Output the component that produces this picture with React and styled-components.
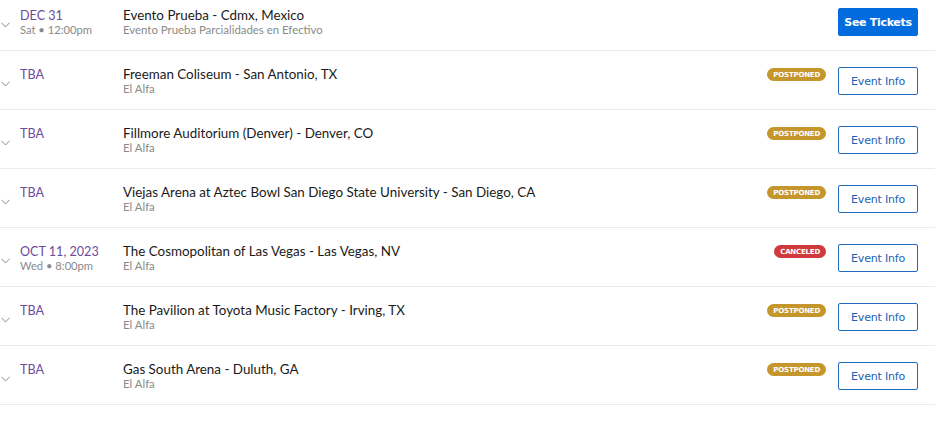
import styled, {createGlobalStyle} from "styled-components";

const GlobalStyle = createGlobalStyle`
  body {
    margin: 0;
    background: #fff;
    font-family: Lato, "Noto Sans", sans-serif;
    overflow: hidden;
  }
`

const events = [
    {date: 'DEC 31', time: 'Sat • 12:00pm', title: 'Evento Prueba - Cdmx, Mexico', sub: 'Evento Prueba Parcialidades en Efectivo', cta: 'tickets'},
    {date: 'TBA', title: 'Freeman Coliseum - San Antonio, TX', sub: 'El Alfa', status: 'postponed'},
    {date: 'TBA', title: 'Fillmore Auditorium (Denver) - Denver, CO', sub: 'El Alfa', status: 'postponed'},
    {date: 'TBA', title: 'Viejas Arena at Aztec Bowl San Diego State University - San Diego, CA', sub: 'El Alfa', status: 'postponed'},
    {date: 'OCT 11, 2023', time: 'Wed • 8:00pm', title: 'The Cosmopolitan of Las Vegas - Las Vegas, NV', sub: 'El Alfa', status: 'canceled'},
    {date: 'TBA', title: 'The Pavilion at Toyota Music Factory - Irving, TX', sub: 'El Alfa', status: 'postponed'},
    {date: 'TBA', title: 'Gas South Arena - Duluth, GA', sub: 'El Alfa', status: 'postponed'},
]

const List = styled.ul`
  list-style: none;
  margin: -8px 0 0;
  padding: 0;
  width: 935px;
`
const Row = styled.li`
  display: flex;
  align-items: flex-start;
  height: 42px;
  padding: 16px 17px 0 0;
  box-sizing: content-box;
  border-bottom: 1px solid #ebebeb;
`
const Chevron = styled.div`
  width: 20px;
  flex-shrink: 0;
  padding-top: 14px;
  & svg {
    display: block;
    margin-left: 1px;
  }
`
const DateCol = styled.div`
  width: 103px;
  flex-shrink: 0;
`
const DateText = styled.div`
  color: #6d4c9e;
  font-size: 12.6px;
  line-height: 15px;
`
const TimeText = styled.div`
  color: #8a8a8a;
  font-size: 11.2px;
  line-height: 13px;
`
const Info = styled.div`
  flex: 1;
`
const Title = styled.div`
  color: #1a1a1a;
  font-size: 13.4px;
  line-height: 15px;
`
const Sub = styled.div`
  color: #8a8a8a;
  font-size: 11.4px;
  line-height: 13px;
`
const Badge = styled.span`
  display: inline-flex;
  align-items: center;
  height: 13px;
  padding: 0 6px;
  border-radius: 7px;
  margin-top: 1px;
  margin-right: 12px;
  background: ${({$status}) => ($status === 'canceled' ? '#d03a3c' : '#c4962c')};
  color: #fff;
  font-family: "DejaVu Sans", sans-serif;
  font-size: 7px;
  font-weight: bold;
  letter-spacing: -0.2px;
  text-transform: uppercase;
`
const Button = styled.button`
  width: 80px;
  height: 28px;
  padding: 0;
  border-radius: 2px;
  font-family: "DejaVu Sans", sans-serif;
  font-size: 11px;
  cursor: pointer;
  border: 1px solid ${({$primary}) => ($primary ? '#026cdf' : '#1f6bc0')};
  background: ${({$primary}) => ($primary ? '#026cdf' : '#fff')};
  color: ${({$primary}) => ($primary ? '#fff' : '#1b61b3')};
  font-weight: ${({$primary}) => ($primary ? 'bold' : 'normal')};
  letter-spacing: ${({$primary}) => ($primary ? '-0.3px' : '-0.2px')};
`

const ChevronIcon = () => (
    <svg width="9" height="6" viewBox="0 0 9 6" fill="none">
        <path d="M0.5 0.8 L4.5 5 L8.5 0.8" stroke="#8c8c8c" strokeWidth="1"/>
    </svg>
)

export default function App() {
    return (
        <>
            <GlobalStyle/>
            <List>
                {events.map((e, i) => (
                    <Row key={i}>
                        <Chevron><ChevronIcon/></Chevron>
                        <DateCol>
                            <DateText>{e.date}</DateText>
                            {e.time && <TimeText>{e.time}</TimeText>}
                        </DateCol>
                        <Info>
                            <Title>{e.title}</Title>
                            <Sub>{e.sub}</Sub>
                        </Info>
                        {e.status && <Badge $status={e.status}>{e.status}</Badge>}
                        {e.cta === 'tickets'
                            ? <Button $primary>See Tickets</Button>
                            : <Button>Event Info</Button>}
                    </Row>
                ))}
            </List>
        </>
    )
}
